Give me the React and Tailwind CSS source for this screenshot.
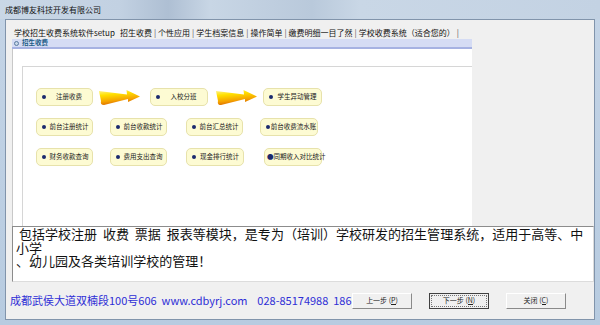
const cjk = { fontFamily: '"Noto Sans CJK SC", "Noto Sans", sans-serif' };

const Arrow = ({ id }) => (
  <svg width="43" height="18" viewBox="0 0 43 18" className="shrink-0">
    <defs>
      <linearGradient id={id} x1="0" y1="0" x2="0.3" y2="1">
        <stop offset="0" stopColor="#fff59a" />
        <stop offset="0.35" stopColor="#ffe000" />
        <stop offset="0.75" stopColor="#f5a300" />
        <stop offset="1" stopColor="#d96a00" />
      </linearGradient>
    </defs>
    <path d="M1 3 L29 6.5 L28.5 2 L42 8.5 L30 14 L30 11 L6 17 Q2 17 3 13 Z" fill={`url(#${id})`} />
  </svg>
);

const Pill = ({ w, text, tight }) => (
  <div
    className="h-[18px] shrink-0 flex items-center rounded-[5px] bg-[#fdfbd3] border border-[#e7e2ab] text-[6.5px] text-[#222]"
    style={{ width: w }}
  >
    {tight ? (
      <span className="pl-[2px] whitespace-nowrap">
        <span className="text-[#1b2a6e]">●</span>
        {text}
      </span>
    ) : (
      <>
        <span className="ml-[5px] w-[4px] h-[4px] rounded-full bg-[#1b2a6e] shrink-0" />
        <span className="flex-1 text-center whitespace-nowrap">{text}</span>
      </>
    )}
  </div>
);

const Sep = () => <span className="mx-[2px] text-[#555]">|</span>;

const Btn = ({ label, k, focus, ml }) => (
  <div
    className={`h-[16px] w-[60px] shrink-0 flex items-center justify-center bg-[#f0f0f0] text-[7px] leading-none text-[#222] whitespace-nowrap ${
      focus
        ? 'border border-[#404040] outline outline-1 outline-dotted outline-[#777] -outline-offset-[3px]'
        : 'border border-t-white border-l-white border-r-[#8a8a8a] border-b-[#8a8a8a]'
    }`}
    style={{ marginLeft: ml }}
  >
    {label} (<span className="border-b border-[#222] leading-none">{k}</span>)
  </div>
);

export default function App() {
  return (
    <div className="w-[600px] h-[325px] bg-gradient-to-b from-[#c4d4e6] to-[#b7cbe0] flex flex-col overflow-hidden" style={cjk}>
      {/* title bar */}
      <div className="h-[19px] shrink-0 flex items-center pl-[5px] text-[8px] text-[#111] bg-[linear-gradient(90deg,#c9d7e6_0%,#c2d1e2_20%,#aebfd3_28%,#c8d6e5_35%,#b9c9db_52%,#c9d7e6_60%,#c3d2e3_100%)]">
        成都博友科技开发有限公司
      </div>

      {/* client area */}
      <div className="ml-[5px] mr-[5px] mb-[5px] flex-1 bg-[#f0f0f0] border border-[#8194ab] flex flex-col">
        {/* tabs */}
        <div className="h-[19px] pt-[6px] pl-[8px] flex items-center text-[8px] text-[#111] whitespace-nowrap">
          <span>学校招生收费系统软件setup</span>
          <span className="ml-[5px]">招生收费</span>
          <Sep />
          <span>个性应用</span>
          <Sep />
          <span>学生档案信息</span>
          <Sep />
          <span>操作简单</span>
          <Sep />
          <span>缴费明细一目了然</span>
          <Sep />
          <span>学校收费系统（适合您的）</span>
          <Sep />
        </div>

        {/* header bar */}
        <div className="ml-[6px] w-[460px] h-[10px] flex items-center bg-[#d5dcf4] border-b-2 border-[#a6b2e2] text-[6.5px] font-bold text-[#1b5c86]">
          <span className="ml-[2px] mr-[3px] w-[5px] h-[5px] rounded-full border border-[#5a7aa0] bg-[#c8d8e8]" />
          招生收费
        </div>

        {/* content panel */}
        <div className="ml-[6px] w-[460px] h-[177px] bg-white border-l border-[#c8c8c8] pl-[9px] pt-[17px] flex">
          <div className="flex-1 border-l border-t border-[#d6d6d6] pl-[13px] flex flex-col">
            <div className="mt-[21px] flex items-center">
              <Pill w={57} text="注册收费" />
              <div className="ml-[5px]"><Arrow id="a1" /></div>
              <div className="ml-[9px]"><Pill w={58} text="入校分班" /></div>
              <div className="ml-[7px]"><Arrow id="a2" /></div>
              <div className="ml-[5px]"><Pill w={59} text="学生异动管理" /></div>
            </div>
            <div className="mt-[12px] flex items-center">
              <Pill w={57} text="前台注册统计" />
              <div className="ml-[17px]"><Pill w={57} text="前台收款统计" /></div>
              <div className="ml-[19px]"><Pill w={57} text="前台汇总统计" /></div>
              <div className="ml-[17px]"><Pill w={58} text="前台收费流水账" /></div>
            </div>
            <div className="mt-[12px] flex items-center">
              <Pill w={57} text="财务收款查询" />
              <div className="ml-[17px]"><Pill w={57} text="费用支出查询" /></div>
              <div className="ml-[19px]"><Pill w={58} text="现金排行统计" /></div>
              <div className="ml-[20px]"><Pill w={58} text="同期收入对比统计" tight /></div>
            </div>
          </div>
        </div>

        {/* description */}
        <div className="ml-[6px] h-[56px] bg-white border border-t-[#8c8c8c] border-l-[#8c8c8c] border-r-[#dcdcdc] border-b-[#dcdcdc] pl-[3px] text-[13px] leading-[13.5px] tracking-[0.02px] text-[#111]">
          <div>&nbsp;包括学校注册&nbsp; 收费&nbsp; 票据&nbsp; 报表等模块，是专为（培训）学校研发的招生管理系统，适用于高等、中</div>
          <div>小学</div>
          <div>、幼儿园及各类培训学校的管理！</div>
        </div>

        {/* status */}
        <div className="flex-1 flex items-center">
          <div className="ml-[4px] w-[342px] shrink-0 overflow-hidden whitespace-nowrap text-[11px] text-[#2e2ed6]">
            成都武侯大道双楠段100号606&nbsp; www.cdbyrj.com &nbsp;&nbsp; 028-85174988&nbsp; 186
          </div>
          <Btn label="上一步" k="P" />
          <Btn label="下一步" k="N" focus ml={17} />
          <Btn label="关闭" k="C" ml={17} />
        </div>
      </div>
    </div>
  );
}
